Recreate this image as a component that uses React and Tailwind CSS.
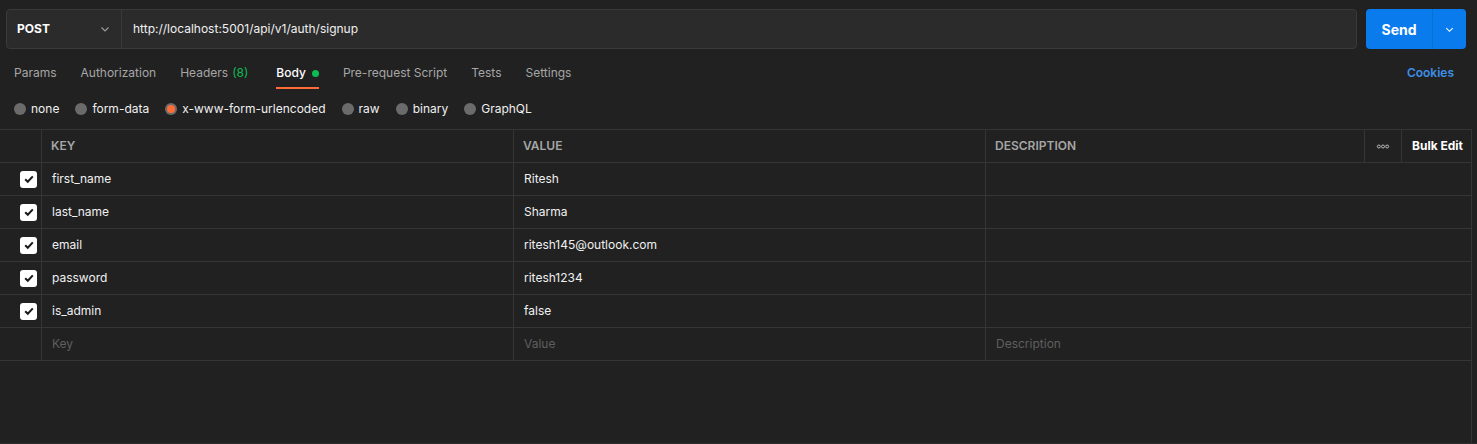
import React from 'react';

const tabs = [
  { label: 'Params' },
  { label: 'Authorization' },
  { label: 'Headers', count: '(8)' },
  { label: 'Body', active: true },
  { label: 'Pre-request Script' },
  { label: 'Tests' },
  { label: 'Settings' },
];

const bodyTypes = ['none', 'form-data', 'x-www-form-urlencoded', 'raw', 'binary', 'GraphQL'];

const rows = [
  { key: 'first_name', value: 'Ritesh' },
  { key: 'last_name', value: 'Sharma' },
  { key: 'email', value: 'ritesh145@outlook.com' },
  { key: 'password', value: 'ritesh1234' },
  { key: 'is_admin', value: 'false' },
];

const Chevron = ({ className }) => (
  <svg viewBox="0 0 12 12" className={className} fill="none" stroke="currentColor" strokeWidth="1.2">
    <path d="M2.5 4.5 L6 8 L9.5 4.5" />
  </svg>
);

const Check = () => (
  <div className="w-[17px] h-[17px] rounded-[3px] bg-white flex items-center justify-center">
    <svg viewBox="0 0 12 12" className="w-[12px] h-[12px]" fill="none" stroke="#1a1a1a" strokeWidth="2">
      <path d="M2.2 6.2 L4.8 8.8 L9.8 3.4" />
    </svg>
  </div>
);

const App = () => {
  return (
    <div className="w-[1477px] h-[444px] bg-[#212121] text-white overflow-hidden border-b border-[#2e2e2e]" style={{ fontFamily: 'Inter, "Noto Sans", sans-serif' }}>
      {/* URL BAR */}
      <div className="flex px-[6px] pt-[9px] gap-[9px]">
        <div className="flex flex-1 h-[40px] rounded-[4px] border border-[#3a3a3a] bg-[#2b2b2b]">
          <div className="w-[115px] flex items-center justify-between pl-[10px] pr-[10px] border-r border-[#3a3a3a]">
            <span className="text-[12px] font-bold text-white">POST</span>
            <Chevron className="w-[12px] h-[12px] text-[#9a9a9a]" />
          </div>
          <div className="flex items-center pl-[11px] text-[12px] text-[#f0f0f0]">http://localhost:5001/api/v1/auth/signup</div>
        </div>
        <div className="w-[100px] h-[40px] flex rounded-[4px] bg-[#097bed] mr-[5px]">
          <div className="w-[67px] flex items-center justify-center text-[14px] font-bold text-white border-r border-[#0a6fd6]">Send</div>
          <div className="flex-1 flex items-center justify-center">
            <Chevron className="w-[11px] h-[11px] text-white" />
          </div>
        </div>
      </div>

      {/* TABS */}
      <div className="flex items-start justify-between pl-[14px] pr-[23px] mt-[10px] h-[30px]">
        <div className="flex gap-[24px]">
          {tabs.map(t => (
            <div key={t.label} className={`flex flex-col ${t.active ? 'ml-[4px]' : ''}`}>
              <div className={`flex items-center h-[28px] text-[12px] ${t.active ? 'text-white font-medium' : 'text-[#a6a6a6]'}`}>
                {t.label}
                {t.count && <span className="ml-[4px] text-[#0cbb52]">{t.count}</span>}
                {t.active && <span className="ml-[6px] w-[7px] h-[7px] rounded-full bg-[#0cbb52]" />}
              </div>
              <div className={`h-[2px] ${t.active ? 'bg-[#ff6c37]' : ''}`} />
            </div>
          ))}
        </div>
        <div className="h-[28px] flex items-center text-[12px] font-semibold text-[#3d8fe8]">Cookies</div>
      </div>

      {/* BODY TYPE */}
      <div className="flex items-center pl-[14px] h-[40px] gap-[16px] text-[12px]">
        {bodyTypes.map(b => {
          const on = b === 'x-www-form-urlencoded';
          return (
            <div key={b} className="flex items-center gap-[5px]">
              <span className="w-[12px] h-[12px] rounded-full flex items-center justify-center bg-[#6b6b6b]">
                {on && <span className="w-[8px] h-[8px] rounded-full bg-[#ff6c37]" />}
              </span>
              <span className="text-[#f0f0f0]">{b}</span>
            </div>
          );
        })}
      </div>

      {/* TABLE */}
      <div className="border-t border-[#353535] w-[1472px] border-r">
        <div className="flex h-[33px] border-b border-[#353535] text-[12px] font-semibold text-[#a6a6a6]">
          <div className="w-[42px] border-r border-[#353535]" />
          <div className="w-[472px] border-r border-[#353535] flex items-center pl-[9px]">KEY</div>
          <div className="w-[472px] border-r border-[#353535] flex items-center pl-[9px]">VALUE</div>
          <div className="w-[379px] border-r border-[#353535] flex items-center pl-[9px]">DESCRIPTION</div>
          <div className="w-[37px] border-r border-[#353535] flex items-center justify-center">
            <svg viewBox="0 0 16 6" className="w-[14px] h-[5px]" fill="none" stroke="#d0d0d0" strokeWidth="1">
              <circle cx="3" cy="3" r="1.8" />
              <circle cx="8" cy="3" r="1.8" />
              <circle cx="13" cy="3" r="1.8" />
            </svg>
          </div>
          <div className="flex-1 flex items-center pl-[10px] text-white font-bold">Bulk Edit</div>
        </div>
        {rows.map(r => (
          <div key={r.key} className="flex h-[33px] border-b border-[#353535] text-[12px] text-[#f0f0f0]">
            <div className="w-[42px] border-r border-[#353535] flex items-center pl-[20px]">
              <Check />
            </div>
            <div className="w-[472px] border-r border-[#353535] flex items-center pl-[10px]">{r.key}</div>
            <div className="w-[472px] border-r border-[#353535] flex items-center pl-[10px]">{r.value}</div>
            <div className="flex-1" />
          </div>
        ))}
        <div className="flex h-[33px] border-b border-[#353535] text-[12px] text-[#5f5f5f]">
          <div className="w-[42px] border-r border-[#353535]" />
          <div className="w-[472px] border-r border-[#353535] flex items-center pl-[10px]">Key</div>
          <div className="w-[472px] border-r border-[#353535] flex items-center pl-[10px]">Value</div>
          <div className="flex-1 flex items-center pl-[10px]">Description</div>
        </div>
        <div className="h-[82px]" />
      </div>
    </div>
  );
};

export default App;
